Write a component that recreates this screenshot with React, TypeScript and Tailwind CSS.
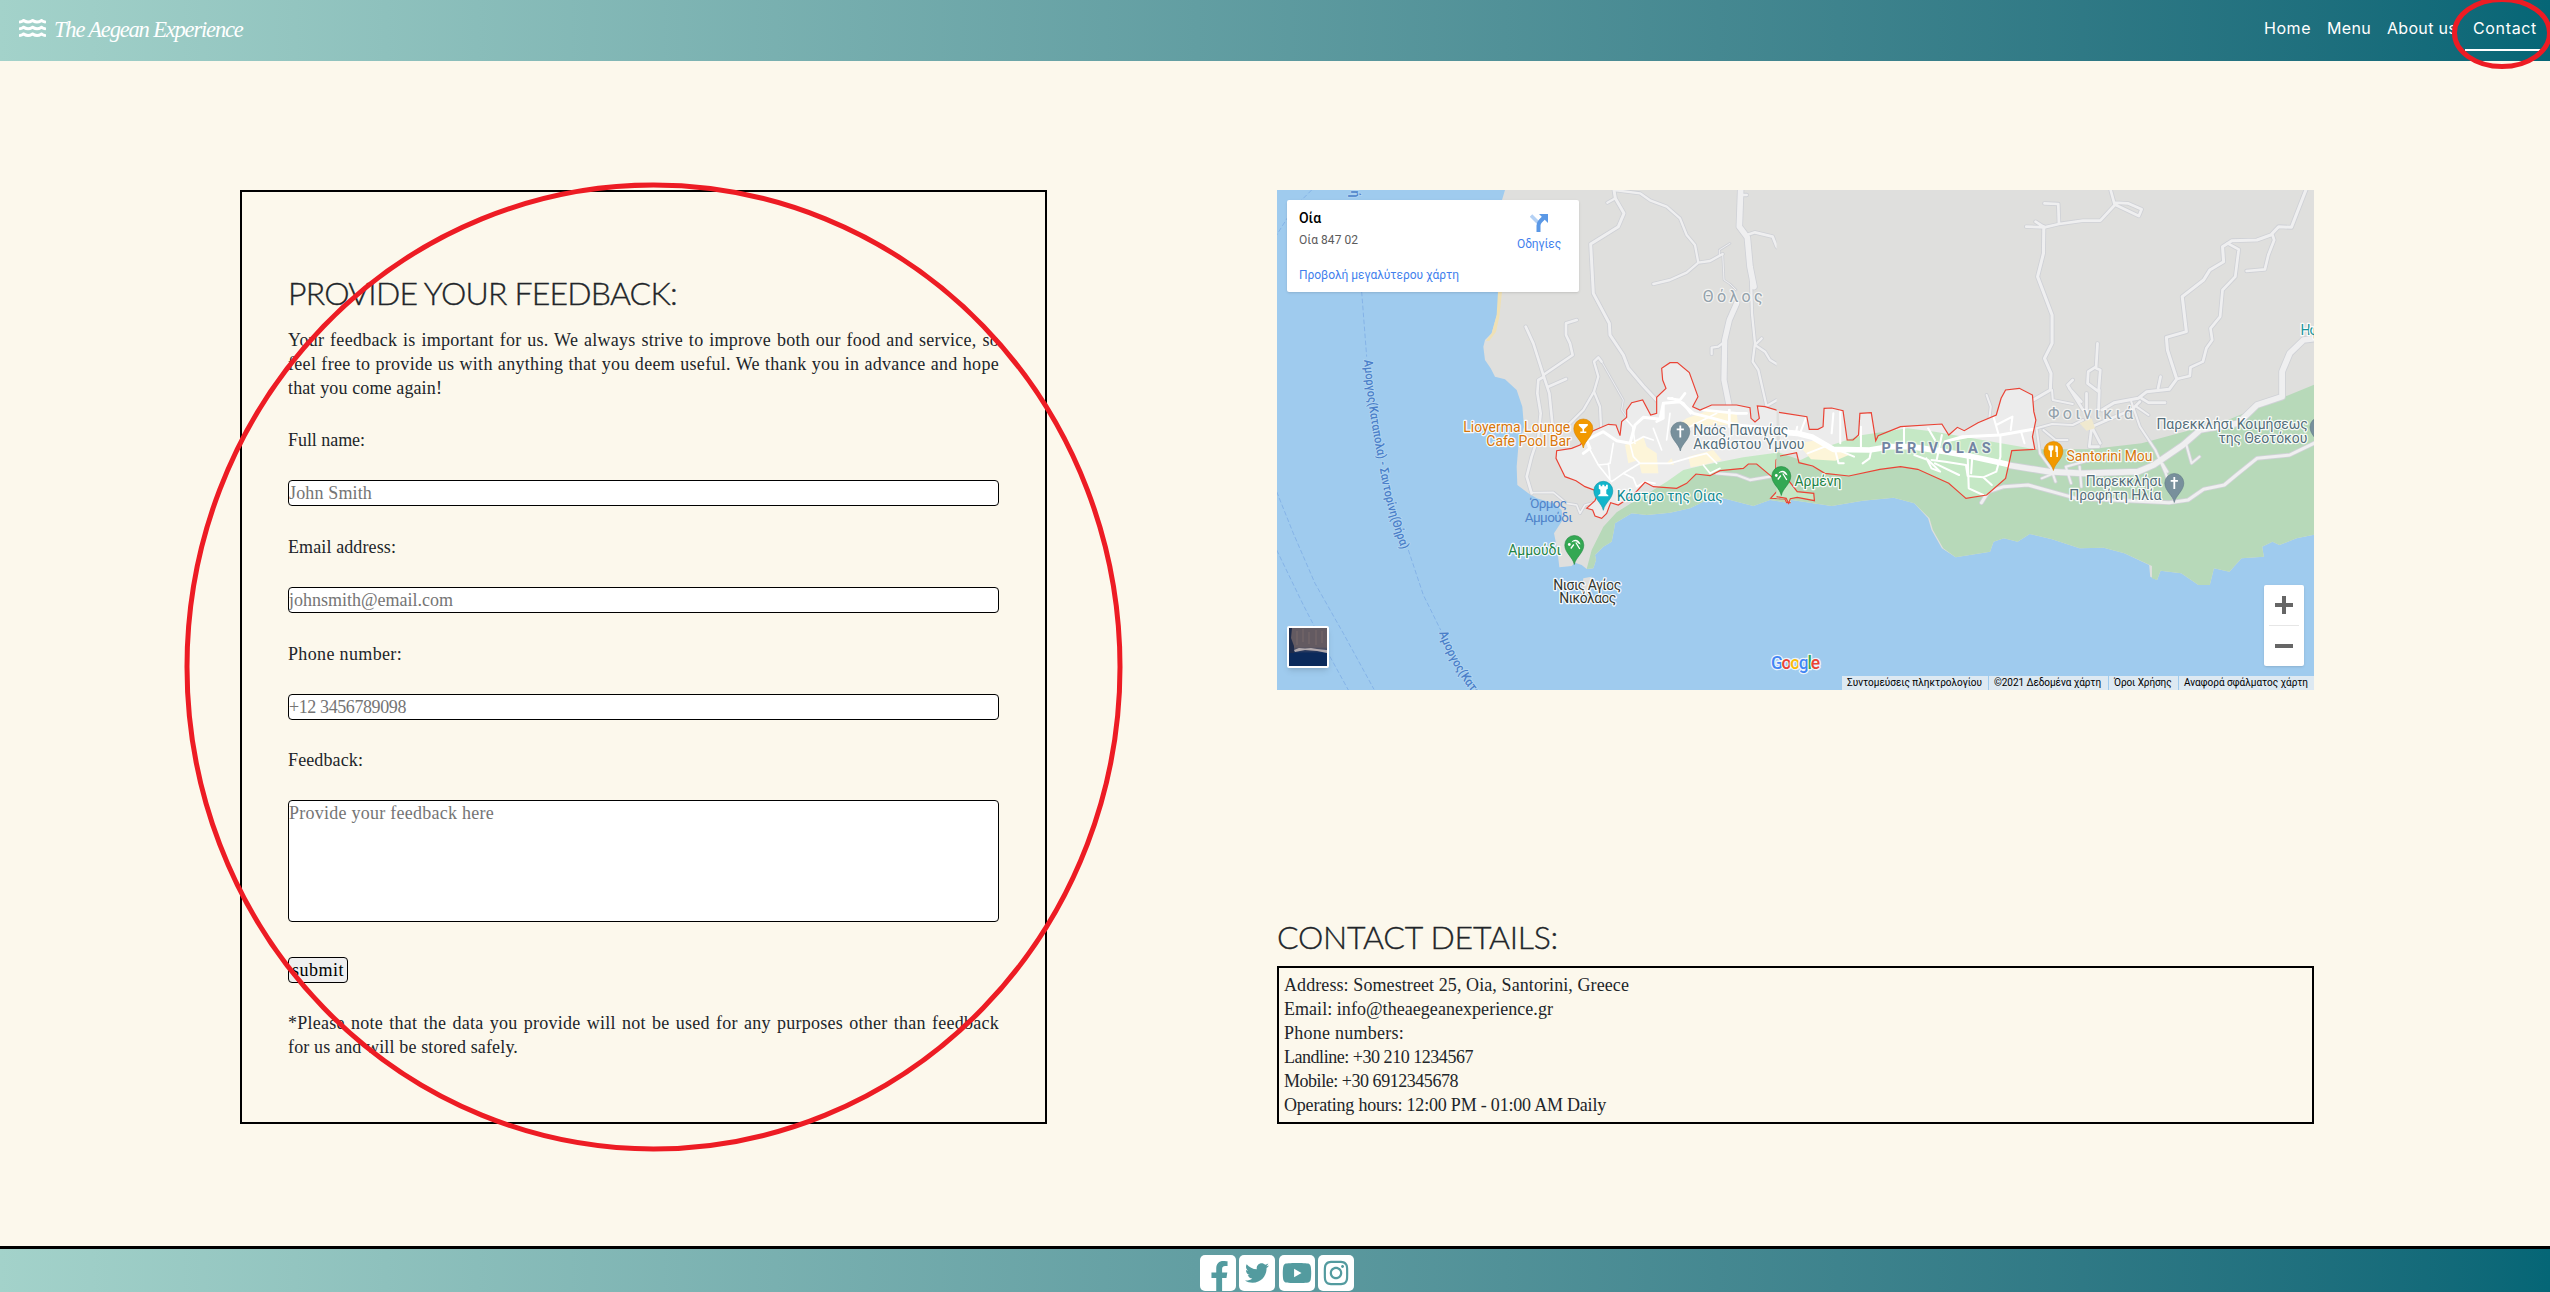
import React from "react";
import { FaFacebookF, FaInstagram, FaTwitter, FaWater, FaYoutube } from "react-icons/fa";

const SERIF = '18px "Liberation Serif"';
const HEADING = '300 32px "Lato"';
const NAV = '16px "Inter"';
const LOGO = 'italic 22.5px "Liberation Serif"';

const context = document.createElement("canvas").getContext("2d")!;

/** Letter spacing in px that makes a line of text take the given width. */
function spacing(text: string, width: number, font: string) {
  context.font = font;
  return `${(width - context.measureText(text).width) / text.length}px`;
}

function Line({ text, width, font = SERIF, className = "" }: { text: string; width: number; font?: string; className?: string }) {
  return (
    <span className={`block whitespace-nowrap ${className}`} style={{ letterSpacing: spacing(text, width, font) }}>
      {text}
    </span>
  );
}

function Field({ label, labelWidth, hint, hintWidth }: { label: string; labelWidth: number; hint: string; hintWidth: number }) {
  return (
    <label className="flex flex-col gap-7">
      <Line text={label} width={labelWidth} />
      <input
        className="h-[26px] rounded border border-black bg-white px-0 placeholder:text-[#757575]"
        placeholder={hint}
        style={{ letterSpacing: spacing(hint, hintWidth, SERIF) }}
      />
    </label>
  );
}

const NAV_ITEMS = [
  { text: "Home", width: 47 },
  { text: "Menu", width: 44 },
  { text: "About us", width: 70 },
  { text: "Contact", width: 64 },
];

function Header() {
  return (
    <header className="flex h-[61px] shrink-0 items-start justify-between bg-linear-to-r from-[#a3d2ca] to-[#056676] pl-[19px] pr-[5px] text-white">
      <div className="flex pt-4">
        <FaWater className="h-6 w-[27px]" />
        <Line text="The Aegean Experience" width={189} font={LOGO} className="ml-2 font-['Liberation_Serif',serif] text-[22.5px] leading-7 italic" />
      </div>
      <nav className="flex pt-[7px] font-['Inter',sans-serif] text-[16px]">
        {NAV_ITEMS.map((item) => (
          <a key={item.text} className={`h-11 px-2 leading-[43px] ${item.text === "Contact" ? "border-b-2 border-white" : ""}`}>
            <Line text={item.text} width={item.width} font={NAV} />
          </a>
        ))}
      </nav>
    </header>
  );
}

/* ---------- map ---------- */

const LAND_WEST =
  "M705 30L690 80V330L682 400L665 460L645 480L640 500L645 540L662 565L675 590L705 598L740 630L757 680L762 740L745 800L740 860L742 915L775 940L800 955L850 970L875 990L878 1020L852 1060L862 1110L868 1162L905 1158L915 1148L935 1155L950 1167L970 1165L978 1140L975 1125L1000 1100L1025 1085L1032 1050L1035 1030L1085 1000L1130 1005L1200 998L1260 985L1300 965L1310 950L1360 955L1450 978L1500 960L1562 970V30Z";
const GREEN_WEST =
  "M950 1167L970 1165L978 1140L975 1125L1000 1100L1025 1085L1032 1050L1035 1030L1085 1000L1130 1005L1200 998L1260 985L1300 965L1310 950L1360 955L1450 978L1500 960L1562 970V812L1420 832L1300 856L1240 870L1190 905L1150 930L1090 965L1040 997L1000 1040L965 1110Z";
const TOWN_WEST =
  "M1562 703L1485 680L1462 678L1468 715L1455 726L1443 715L1440 683L1400 675H1325L1290 690L1268 680L1284 650L1258 578L1222 548H1200L1175 565L1178 600L1188 625L1160 652V700L1142 705L1118 660L1085 668L1070 690V712L1055 725L1050 767L1038 735L1015 733L970 752L930 795L905 805L860 812L858 835L885 890L918 902L945 920L985 935L975 962L950 985L968 990L975 1008L995 1015L1010 1000L1022 968L1045 975L1090 945L1125 907L1150 920L1220 925L1250 910L1278 882L1320 887L1350 872L1420 865L1435 852H1460L1505 890L1530 915L1520 935L1502 955L1545 957L1550 968H1562";
const LAND_EAST =
  "M-10 30H1560V1062L1500 1075L1450 1095L1430 1085L1400 1100L1405 1130L1340 1135L1305 1175L1260 1165L1248 1215H1215L1165 1180L1105 1172L1095 1200L1075 1190L1072 1155L1000 1120L940 1103L870 1105L790 1078L725 1062L690 1085L650 1075L620 1085L610 1115L510 1132L470 1105L440 1050L430 1015L390 970L330 953L240 962L150 978L0 955H-10Z";
const GREEN_EAST =
  "M-10 815L60 840L150 795L240 765L370 745L450 755L700 800L740 808H900L1050 790L1300 720L1560 610V1062L1500 1075L1450 1095L1430 1085L1400 1100L1405 1130L1340 1135L1305 1175L1260 1165L1248 1215H1215L1165 1180L1105 1172L1095 1200L1080 1195V1158L1000 1120L940 1103L870 1105L790 1078L725 1062L690 1085L650 1075L620 1085L610 1115L510 1132L474 1105L444 1050L434 1015L390 970L330 953L240 962L150 978L0 955H-10Z";
const TOWN_EAST =
  "M-3 697L78 710L85 748H110L125 740L128 685L150 684L183 692L195 780H212L228 765L232 700L265 698L278 782L285 767L350 740L470 732L490 765L515 742L535 752L575 728L628 705L642 655L655 630L695 625L733 645L737 695L743 720L733 770L740 808L673 812L665 850L655 895L600 945L540 955L520 937L490 910L400 868L350 860L290 868L200 888L130 880L95 858L55 848L48 818L0 828";
const BEACH_EAST = "M-10 880L20 895L50 935L98 940L100 962L50 952L30 956L25 970L18 955L-10 950";

type Road = [string, number];
const ROADS_WEST: Road[] = [
  ["M1032 30L1036 55L1062 100L1045 140L962 192L970 340L1018 430L1020 465L1060 525L1075 565L1120 618L1178 680", 9],
  ["M1036 55L1012 68M1032 30L1110 40L1142 62L1190 80L1230 115L1250 165L1275 195L1285 248L1250 278L1200 300L1150 312M1285 248L1320 243L1358 222", 7],
  ["M1412 30L1408 140L1432 172L1440 260L1452 320", 17],
  ["M1412 45H1430M1430 165L1455 157L1508 170L1520 200L1550 230", 8],
  ["M1400 370L1378 420L1364 480L1362 600L1378 680V725", 16],
  ["M1443 300L1446 400L1455 490L1448 545L1465 570L1490 680L1497 740M1455 495L1475 475M1455 495L1485 515L1500 540L1525 555L1532 585M1495 675L1530 655L1535 630M1364 485L1345 500L1325 503V522", 7],
  ["M767 440L790 490L820 585L838 640L850 760M820 585L908 525L900 490L888 465V430L920 420M835 620L888 597M822 590L805 600L802 640L812 700L805 770L785 830L770 890L785 940", 8],
  ["M890 740L940 690L972 635L985 590L972 545L985 532L995 545M972 635L990 680L993 740", 7],
  ["M785 938L850 937L890 970L920 975L930 1000L945 975L1000 960", 5],
  ["M995 545L1060 660L1055 690L1090 740", 3],
  ["M1358 222L1362 300L1380 312L1398 330M1348 225V210L1380 190", 3],
  ["M1310 870L1340 880L1400 885L1440 900L1500 890", 7],
];
const STREETS_WEST: Road[] = [
  ["M940 820L960 805L950 780L1000 755L1040 782L1080 790L1095 735L1120 712L1170 718L1180 670L1230 665L1270 700L1330 715L1400 735L1500 745L1562 750", 9],
  ["M1195 655L1230 660L1245 640M1378 690V740M1180 670V715L1160 725M1205 655L1240 670L1262 700M1300 690L1400 700H1430", 8],
  ["M955 800L985 855L1025 905L1060 880L1110 850L1200 850L1270 830L1310 820M1080 790L1090 830L1110 850M1020 900L1015 850M985 855L1015 852M1070 720L1088 740L1095 790M1150 745L1175 810M1030 790L1020 850M1200 700L1190 780M1300 855L1320 880L1350 865M1060 880L1090 895L1100 920L1125 905L1155 910M1310 820L1340 850M1085 790L1120 770L1150 780M1250 745L1340 700", 5],
];
const BLOCKS_WEST =
  "M1065 795L1120 770L1130 800L1160 820L1165 880H1115L1105 840L1075 850ZM1190 850L1205 835L1212 855ZM1215 740L1250 715L1320 690L1400 700L1405 735L1330 735L1260 740L1235 770L1215 770ZM1255 830L1330 810L1355 840L1300 855L1262 862Z";
const ROADS_EAST: Road[] = [
  ["M768 70L808 72L810 132M715 140L768 142L810 132L880 122H930L972 75L960 30M742 125L768 142M972 68L1010 70L1050 88L1042 108L975 75", 8],
  ["M766 140L765 220L748 290L790 405V490L768 535L787 580L785 630L735 660", 9],
  ["M1527 30L1485 142L1448 140L1425 165L1385 180L1312 182L1285 200L1288 245L1248 270L1230 300L1168 350L1180 455L1122 472L1125 510L1152 597L1130 628L1065 635L1040 655L970 668L935 690", 9],
  ["M1430 165L1435 180L1418 225L1408 268L1355 273M1300 190L1332 208L1322 290L1285 330L1278 410L1250 445L1255 480L1238 505L1228 545L1192 562L1190 588L1152 597M1105 590L1098 625M1050 655L1070 668H1118", 8],
  ["M1560 475L1520 480L1480 520L1458 575V650L1385 675L1330 730L1220 750L1170 795L1085 855L1040 875L880 880L780 875L660 855", 17],
  ["M922 490L918 560L895 575L893 610L925 635L930 570L918 565M927 630L925 690M840 625L875 665M850 600L835 615L880 690M890 640V690L905 740L950 720L1020 690L1045 665M905 740L930 790M905 740L898 800L925 800", 8],
  ["M790 630L792 660L850 672M745 745L790 732L850 735L880 720M745 745L755 820L790 870M765 750L800 780H835M1020 665L1045 740L1090 810L1120 880L1145 960M1070 705L1035 680M790 875L800 905M760 895L795 880M830 860L845 910M870 860L875 920M830 860L900 840M600 645L612 680L608 715M1180 795L1195 850L1218 830M1110 850L1125 875", 6],
  ["M585 968L605 935L650 920L720 915L790 935L860 955L1130 968L1185 960L1230 928L1290 915L1325 885L1385 835L1480 825L1560 785", 9],
];
const STREETS_EAST: Road[] = [
  ["M-10 755L50 760L95 772L155 808L260 810L320 800L380 800", 17],
  ["M380 800L480 815L560 830L660 853", 17],
  ["M480 785L530 770L640 765L735 748", 9],
  ["M500 780L560 768M635 765L620 710M628 735L675 710L670 750M640 765V830L628 875L590 892L545 888L540 855L480 845L440 840M390 825L430 840L465 875L440 865L425 835M450 850L520 885M545 830L548 925L590 945M558 835L555 880M590 892L615 915M450 780L430 745M470 765L455 840M160 810L170 850H185M235 740V810M360 740V800M155 700L150 760M175 690V790M265 810L260 835L240 850M130 800L80 820M60 755L75 715M700 755L710 790M45 765L50 740M180 815L215 830", 6],
];

function Roads({ roads, core, edge }: { roads: Road[]; core: string; edge?: string }) {
  return (
    <g fill="none" strokeLinecap="round" strokeLinejoin="round">
      {edge && roads.map(([d, w]) => <path key={"e" + d} d={d} stroke={edge} strokeWidth={w + 5} />)}
      {roads.map(([d, w]) => (
        <path key={d} d={d} stroke={core} strokeWidth={w} />
      ))}
    </g>
  );
}

const LABELS: { t: string; x: number; y: number; w: number; c: string; s?: number; b?: number }[] = [
  { t: "Lioyerma Lounge", x: 186.3, y: 242, w: 107, c: "#d8760a" },
  { t: "Cafe Pool Bar", x: 209.3, y: 256, w: 84.5, c: "#d8760a" },
  { t: "Ναός Παναγίας", x: 416.3, y: 245, w: 95, c: "#546e7a" },
  { t: "Ακαθίστου Ύμνου", x: 416.3, y: 259, w: 111, c: "#546e7a" },
  { t: "Κάστρο της Οίας", x: 339.7, y: 311, w: 106, c: "#0f8a92" },
  { t: "Αμμούδι", x: 231.3, y: 365, w: 52.7, c: "#1f8446" },
  { t: "Νισις Αγίος", x: 276.3, y: 399.7, w: 68, c: "#33372f" },
  { t: "Νικόλαος", x: 282.3, y: 412.7, w: 57, c: "#33372f" },
  { t: "Θόλος", x: 425.7, y: 112, w: 60, c: "#93a1ab", s: 16 },
  { t: "Φοινικιά", x: 771, y: 229, w: 85, c: "#93a1ab", s: 16 },
  { t: "PERIVOLAS", x: 604.6, y: 263, w: 109, c: "#7284a3", s: 14.5, b: 700 },
  { t: "Santorini Mou", x: 789.5, y: 271, w: 86, c: "#d8760a" },
  { t: "Παρεκκλήσι", x: 808.8, y: 296.3, w: 76, c: "#546e7a" },
  { t: "Προφήτη Ηλία", x: 792.3, y: 310.3, w: 92, c: "#546e7a" },
  { t: "Παρεκκλήσι Κοιμήσεως", x: 879.4, y: 239.3, w: 151.5, c: "#546e7a" },
  { t: "της Θεοτόκου", x: 941.4, y: 253, w: 89, c: "#546e7a" },
  { t: "Ηφα", x: 1023.4, y: 144.7, w: 26, c: "#1a939b" },
  { t: "Αρμένη", x: 517.5, y: 296, w: 47, c: "#1f8446" },
];

const CROSS = <path d="M0-6V6M-3.6-2.2H3.6" stroke="#fff" strokeWidth="1.8" />;
const UMBRELLA = (
  <g stroke="#fff" fill="none">
    <path d="M-2.800-2.500C-1.500-6.500 5-6.500 6.300-.5L4-1.500 1.800-3.800-1-3.500Z" fill="#fff" stroke="none" />
    <path d="M1.500-2.500L5.500 4M-3.500 3.500L-.5-.5" strokeWidth="1.300" />
    <circle cx="-5" cy="-.5" r="1.400" fill="#fff" stroke="none" />
  </g>
);
const PINS: { x: number; y: number; c: string; e: string; glyph: React.ReactNode }[] = [
  { x: 306.3, y: 238.5, c: "#f29900", e: "#d98200", glyph: <path d="M-4.500-4.500H4.500V-3L.8.5V3H3V4.500H-3V3H-.8V.5L-4.500-3Z" fill="#fff" /> },
  { x: 403.3, y: 241.5, c: "#78909c", e: "#607984", glyph: CROSS },
  { x: 326.3, y: 300.8, c: "#12b5cb", e: "#0c93a6", glyph: <path d="M-4.500-6H-2.700V-4.500H-1V-6H1V-4.500H2.700V-6H4.500V-2L3-1V3L5 4.500V5.500H-5V4.500L-3 3V-1L-4.500-2Z" fill="#fff" /> },
  { x: 297.3, y: 355, c: "#34a853", e: "#208640", glyph: UMBRELLA },
  { x: 504.3, y: 286, c: "#34a853", e: "#208640", glyph: UMBRELLA },
  { x: 776.4, y: 261, c: "#f29900", e: "#d98200", glyph: <path d="M-5-5.500H0V-1.500L-1.500 0V6H-3.300V0L-5-1.500ZM2-5.500C4-5.500 4.500-4.500 4.500-3V6H3V1H2Z" fill="#fff" /> },
  { x: 897.3, y: 293, c: "#78909c", e: "#607984", glyph: CROSS },
  { x: 1042.5, y: 237, c: "#78909c", e: "#607984", glyph: CROSS },
];

const GOOGLE = [
  ["G", "#4285f4"],
  ["o", "#ea4335"],
  ["o", "#fbbc05"],
  ["g", "#4285f4"],
  ["l", "#34a853"],
  ["e", "#ea4335"],
];

function MapDrawing() {
  return (
    <svg className="block h-[500px] w-[1037px] bg-[#9fcbee] font-['Roboto',sans-serif]" viewBox="0 0 1037 500">
      <defs>
        <clipPath id="town-west">
          <path d={TOWN_WEST} />
        </clipPath>
        <clipPath id="town-east">
          <path d={TOWN_EAST} />
        </clipPath>
      </defs>

      <g transform="translate(-7 -10) scale(.33333)">
        <path
          d="M125 30L70 85L20 165M275 335L290 530M415 1110L460 1245L512 1350M20 935L70 1060L135 1210L220 1360L312 1528M20 1110L100 1275L180 1430L235 1530"
          fill="none"
          stroke="#7faee6"
          strokeWidth="2.500"
          strokeDasharray="14 7"
        />
        <path d={LAND_WEST} fill="#dfdfdd" />
        <path d="M684 335H696L688 410L678 455L658 482H648L665 460L680 405Z" fill="#efe0b4" />
        <path d="M940 1195L965 1190L962 1230L945 1250L935 1225Z" fill="#dfdfdd" />
        <path d={GREEN_WEST} fill="#b7d9b9" />
        <Roads roads={ROADS_WEST} core="#efeff0" edge="#cfd1d6" />
        <g clipPath="url(#town-west)">
          <path d={TOWN_WEST} fill="#ececec" />
          <path d={GREEN_WEST} fill="#c5e8c5" />
          <path d={BLOCKS_WEST} fill="#fdf5d9" />
          <Roads roads={STREETS_WEST} core="#ffffff" />
        </g>
        <path d={TOWN_WEST} fill="none" stroke="#ea4335" strokeWidth="3.500" />
        <path d="M1562 826L1530 830L1518 840L1517 870" fill="none" stroke="#ea4335" strokeWidth="3.500" />
      </g>

      <g transform="translate(503 -10) scale(.34439 .33333)">
        <path d={LAND_EAST} fill="#dfdfdd" />
        <path d={GREEN_EAST} fill="#b7d9b9" />
        <Roads roads={ROADS_EAST} core="#efeff0" edge="#cfd1d6" />
        <path d="M870 730L905 715L915 745L890 752Z" fill="#f0e9cf" />
        <g clipPath="url(#town-east)">
          <path d={TOWN_EAST} fill="#ececec" />
          <path d={GREEN_EAST} fill="#c5e8c5" />
          <path d="M50 790L110 780L150 800L200 825L160 842L90 838Z" fill="#fdf5d9" />
          <Roads roads={STREETS_EAST} core="#ffffff" />
        </g>
        <path d={BEACH_EAST} fill="#c5e8c5" stroke="#ea4335" strokeWidth="3.500" />
        <path d={TOWN_EAST} fill="none" stroke="#ea4335" strokeWidth="3.500" />
      </g>

      <g transform="translate(-7 -10) scale(.33333)" fontSize="37" fontWeight="500" fill="#4a7fc9" stroke="#b3d6f2" strokeWidth="5" paintOrder="stroke" strokeLinejoin="round">
        <path id="ferry-a" d="M282 540Q295 700 325 840Q345 980 398 1118" fill="none" stroke="none" />
        <path id="ferry-b" d="M507 1358Q540 1450 600 1530L640 1590" fill="none" stroke="none" />
        <path id="ferry-c" d="M243 -60V62" fill="none" stroke="none" />
        <text textLength="582" lengthAdjust="spacingAndGlyphs">
          <textPath href="#ferry-a" textLength="582" lengthAdjust="spacingAndGlyphs">
            Αμοργος(Καταπολα) - Σαντορίνη(Θήρα)
          </textPath>
        </text>
        <text>
          <textPath href="#ferry-b" textLength="222" lengthAdjust="spacingAndGlyphs">
            Αμοργος(Κατα
          </textPath>
        </text>
        <text>
          <textPath href="#ferry-c">τορίνή</textPath>
        </text>
      </g>

      <g paintOrder="stroke" strokeLinejoin="round">
        <g fill="#4f83c9" fontSize="13.500">
          <text x="253" y="318" textLength="37">
            Όρμος
          </text>
          <text x="247.700" y="331.700" textLength="48">
            Αμμούδι
          </text>
        </g>
        {LABELS.map((l) => (
          <text key={l.t + l.y} x={l.x} y={l.y} textLength={l.w} fill={l.c} fontSize={l.s ?? 14} fontWeight={l.b ?? 400} stroke="#fff" strokeOpacity={l.s ? 0.6 : 0.9} strokeWidth="2.500">
            {l.t}
          </text>
        ))}
        <text x="494" y="479" textLength="49" fontSize="17.500" fontWeight="500" stroke="#fff" strokeOpacity=".8" strokeWidth="2.500">
          {GOOGLE.map(([letter, color], i) => (
            <tspan key={i} fill={color}>
              {letter}
            </tspan>
          ))}
        </text>
      </g>

      {PINS.map((p) => (
        <g key={p.x} transform={`translate(${p.x} ${p.y})`}>
          <path d="M0 19.500C-1.500 12-9.500 8-9.500 0A9.500 9.500 0 1 1 9.500 0C9.500 8 1.500 12 0 19.500Z" fill={p.c} stroke={p.e} strokeWidth=".6" />
          {p.glyph}
        </g>
      ))}
    </svg>
  );
}

const CREDITS = [
  { text: "Συντομεύσεις πληκτρολογίου", width: 135, box: "w-[146px]" },
  { text: "©2021 Δεδομένα χάρτη", width: 107, box: "w-[119px]" },
  { text: "Όροι Χρήσης", width: 57.5, box: "w-[69px]" },
  { text: "Αναφορά σφάλματος χάρτη", width: 124, box: "w-[135px]" },
];

function MapPanel() {
  return (
    <div className="relative h-[500px] w-[1037px] overflow-hidden font-['Roboto',sans-serif]">
      <MapDrawing />
      <div className="absolute top-2.5 left-2.5 flex h-[92px] w-[292px] justify-between rounded-xs bg-white pt-2.5 pr-[18px] pl-3 text-xs shadow">
        <div className="flex flex-col">
          <Line text="Οία" width={22} font="500 14px Roboto" className="text-sm leading-4 font-medium text-black" />
          <Line text="Οία 847 02" width={59} font="12px Roboto" className="mt-1.5 leading-4 text-[#5b5b5b]" />
          <Line text="Προβολή μεγαλύτερου χάρτη" width={160} font="12px Roboto" className="mt-[19px] leading-4 text-[#427fed]" />
        </div>
        <div className="flex flex-col items-center pt-1 text-[#427fed]">
          <svg className="size-[18px]" viewBox="0 0 18 18" fill="none">
            <path d="M1 1.500L8 8.500" stroke="#b4d1f5" strokeWidth="3.600" />
            <path d="M8.500 18V11.500Q8.500 9 10.500 7L14 3.500" stroke="#5a98e6" strokeWidth="4" />
            <path d="M9 0H18V9Z" fill="#5a98e6" />
          </svg>
          <Line text="Οδηγίες" width={44} font="12px Roboto" className="mt-1 leading-4" />
        </div>
      </div>
      <div className="absolute top-[436px] left-2.5 size-[42px] overflow-hidden rounded-xs border-2 border-white bg-linear-to-b from-[#635a61] from-50% to-[#0b2a5b] to-66% shadow-md">
        <svg className="size-full" viewBox="0 0 38 38" fill="none">
          <path d="M0 0H3L2 10 5 18 5 25H0Z" fill="#1f2c4b" />
          <path d="M8 3V17M14 1V14M20 4V16M27 2V17M33 3V15" stroke="#80716c" strokeWidth="2" opacity=".35" />
          <path d="M5 22L10 20 16 20.500 22 20 28 21 38 22V25L28 23 16 22 6 24Z" fill="#b3aaad" />
        </svg>
      </div>
      <div className="absolute top-[395px] left-[987px] flex h-[81px] w-10 flex-col items-center rounded-xs bg-white shadow">
        <div className="flex h-10 items-center">
          <svg className="size-[18px]" viewBox="0 0 18 18">
            <path d="M0 9H18M9 0V18" stroke="#666" strokeWidth="4" />
          </svg>
        </div>
        <div className="h-px w-[30px] bg-[#e6e6e6]" />
        <div className="flex h-10 items-center">
          <div className="h-1 w-[18px] bg-[#666]" />
        </div>
      </div>
      <div className="absolute right-0 bottom-0 flex gap-px text-[10px] leading-[14px] text-black">
        {CREDITS.map((c) => (
          <div key={c.text} className={`h-3.5 bg-[#dde9f2] pl-[5px] ${c.box}`}>
            <Line text={c.text} width={c.width} font="10px Roboto" />
          </div>
        ))}
      </div>
    </div>
  );
}

/* ---------- page ---------- */

const CONTACT = [
  { text: "Address: Somestreet 25, Oia, Santorini, Greece", width: 345 },
  { text: "Email: info@theaegeanexperience.gr", width: 269 },
  { text: "Phone numbers:", width: 120 },
  { text: "Landline: +30 210 1234567", width: 189 },
  { text: "Mobile: +30 6912345678", width: 174 },
  { text: "Operating hours: 12:00 PM - 01:00 AM Daily", width: 323 },
];

const TITLE = "font-['Lato',sans-serif] text-[32px] leading-[38px] font-light [-webkit-text-stroke:0.35px_#212529]";

function FeedbackForm() {
  return (
    <form className="flex h-[934px] w-[807px] flex-col border-2 border-black px-[46px] pt-[82px]">
      <h2 className={TITLE}>
        <Line text="PROVIDE YOUR FEEDBACK:" width={390} font={HEADING} />
      </h2>
      <div className="mt-4 mb-7">
        <Line text="Your feedback is important for us. We always strive to improve both our food and service, so" width={695} className="[text-align-last:justify]" />
        <Line text="feel free to provide us with anything that you deem useful. We thank you in advance and hope" width={706} className="[text-align-last:justify]" />
        <Line text="that you come again!" width={154} />
      </div>
      <div className="flex flex-col gap-[29px]">
        <Field label="Full name:" labelWidth={77} hint="John Smith" hintWidth={83} />
        <Field label="Email address:" labelWidth={108} hint="johnsmith@email.com" hintWidth={164} />
        <Field label="Phone number:" labelWidth={114} hint="+12 3456789098" hintWidth={117} />
      </div>
      <label className="mt-7 flex flex-col gap-7">
        <Line text="Feedback:" width={75} />
        <textarea
          className="h-[122px] resize-none rounded border border-black bg-white px-0 placeholder:text-[#757575]"
          placeholder="Provide your feedback here"
          style={{ letterSpacing: spacing("Provide your feedback here", 205, SERIF) }}
        />
      </label>
      <button type="button" className="mt-[35px] h-[26px] w-[60px] rounded border border-black bg-[#efefef] pl-[3px] text-left text-black">
        <Line text="submit" width={52} />
      </button>
      <div className="mt-7">
        <Line text="*Please note that the data you provide will not be used for any purposes other than feedback" width={688} className="[text-align-last:justify]" />
        <Line text="for us and will be stored safely." width={230} />
      </div>
    </form>
  );
}

const TILE = "flex size-9 items-center justify-center overflow-hidden rounded-[5px] bg-white text-[#539b9f]";

export default function App() {
  return (
    <div className="relative flex h-[1292px] w-[2550px] flex-col overflow-hidden bg-[#fcf8ec] font-['Liberation_Serif',serif] text-[18px] leading-6 text-[#212529]">
      <Header />
      <main className="flex grow gap-[230px] pt-[129px] pl-60">
        <FeedbackForm />
        <div className="flex h-[934px] w-[1037px] flex-col justify-between">
          <MapPanel />
          <section>
            <h2 className={`mb-2.5 ${TITLE}`}>
              <Line text="CONTACT DETAILS:" width={282} font={HEADING} />
            </h2>
            <div className="border-2 border-black p-[5px]">
              {CONTACT.map((line) => (
                <Line key={line.text} text={line.text} width={line.width} />
              ))}
            </div>
          </section>
        </div>
      </main>
      <footer className="flex h-[46px] shrink-0 justify-center gap-[3.3px] border-t-[3px] border-black bg-linear-to-r from-[#a3d2ca] to-[#056676] pt-1.5 pl-1">
        <div className={TILE}>
          <FaFacebookF className="mt-1.5 ml-0.5 h-[30px] w-[19px]" />
        </div>
        <div className={TILE}>
          <FaTwitter className="size-6" />
        </div>
        <div className={TILE}>
          <FaYoutube className="size-[30px]" />
        </div>
        <div className={TILE}>
          <FaInstagram className="size-7" />
        </div>
      </footer>
      <svg className="pointer-events-none absolute inset-0 size-full" viewBox="0 0 2550 1292" fill="none" stroke="#ed1c24" strokeWidth="5">
        <ellipse cx="653.500" cy="667" rx="466.500" ry="482" />
        <ellipse cx="2502" cy="33" rx="47.500" ry="33.500" />
      </svg>
    </div>
  );
}
